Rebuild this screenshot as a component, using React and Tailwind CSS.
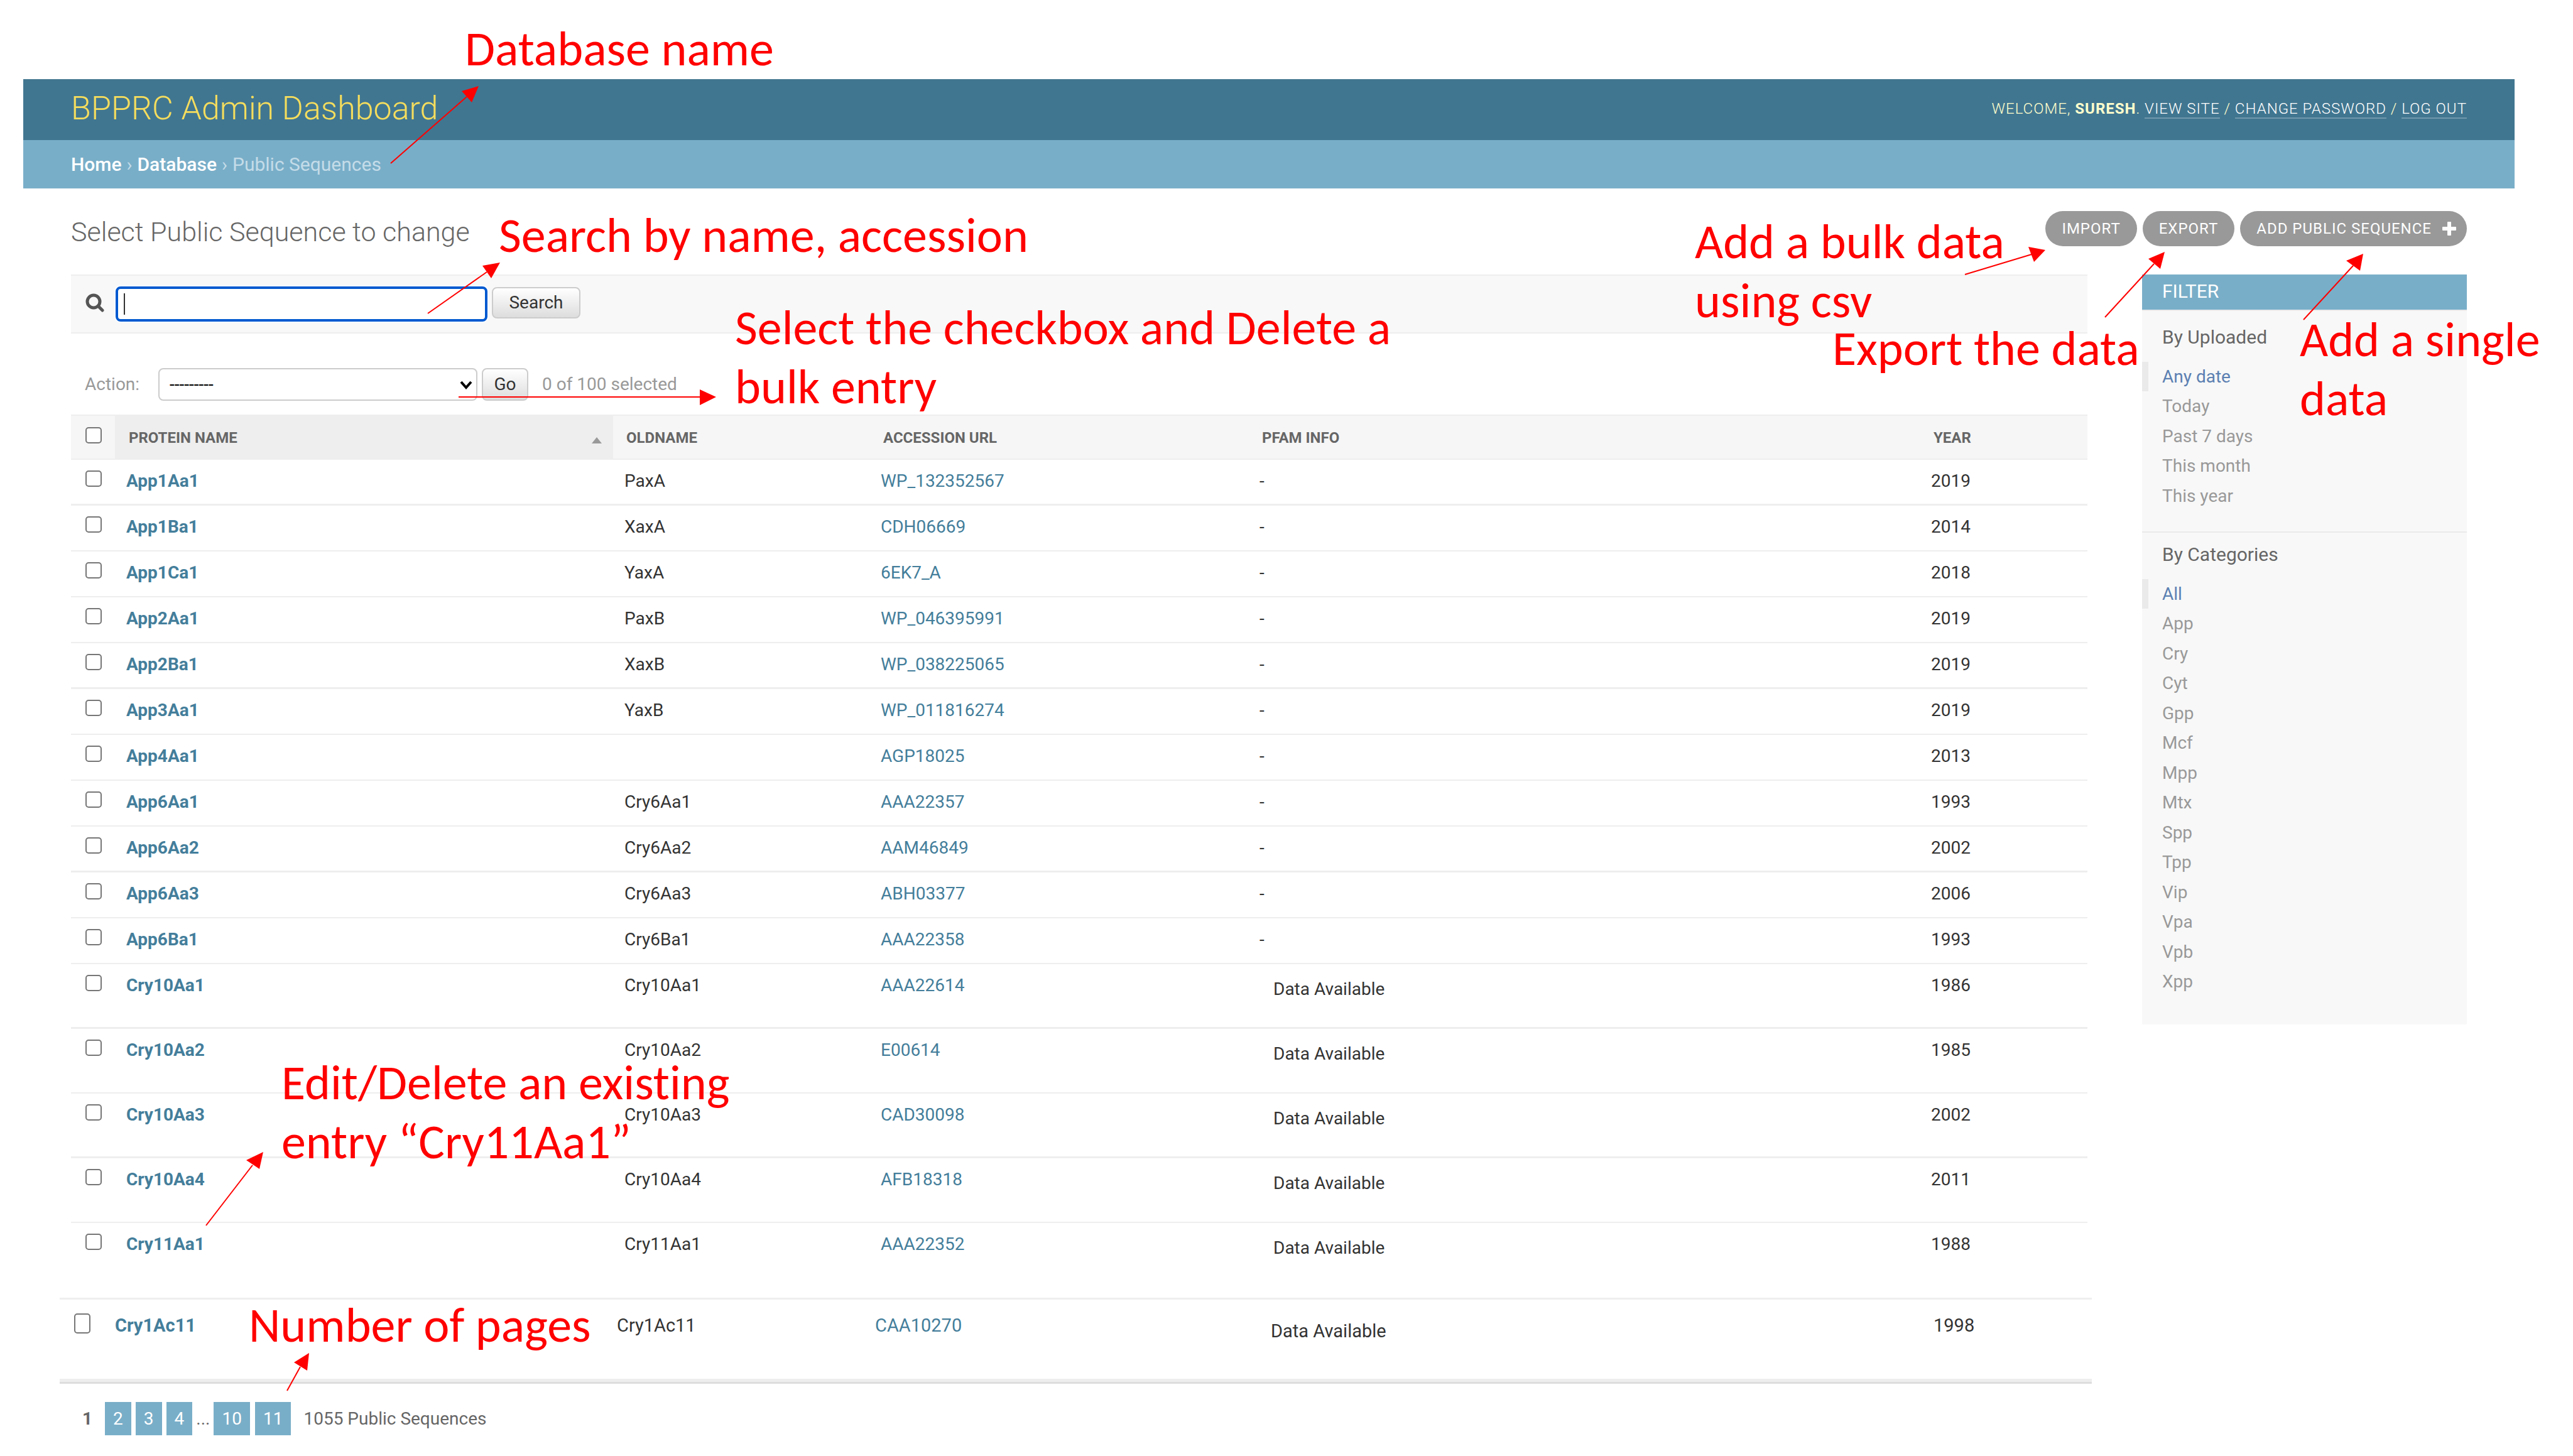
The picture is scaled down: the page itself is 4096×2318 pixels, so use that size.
import React from "react";

const rows = [
  ["App1Aa1", "PaxA", "WP_132352567", "-", "2019"],
  ["App1Ba1", "XaxA", "CDH06669", "-", "2014"],
  ["App1Ca1", "YaxA", "6EK7_A", "-", "2018"],
  ["App2Aa1", "PaxB", "WP_046395991", "-", "2019"],
  ["App2Ba1", "XaxB", "WP_038225065", "-", "2019"],
  ["App3Aa1", "YaxB", "WP_011816274", "-", "2019"],
  ["App4Aa1", "", "AGP18025", "-", "2013"],
  ["App6Aa1", "Cry6Aa1", "AAA22357", "-", "1993"],
  ["App6Aa2", "Cry6Aa2", "AAM46849", "-", "2002"],
  ["App6Aa3", "Cry6Aa3", "ABH03377", "-", "2006"],
  ["App6Ba1", "Cry6Ba1", "AAA22358", "-", "1993"],
  ["Cry10Aa1", "Cry10Aa1", "AAA22614", "Data Available", "1986"],
  ["Cry10Aa2", "Cry10Aa2", "E00614", "Data Available", "1985"],
  ["Cry10Aa3", "Cry10Aa3", "CAD30098", "Data Available", "2002"],
  ["Cry10Aa4", "Cry10Aa4", "AFB18318", "Data Available", "2011"],
  ["Cry11Aa1", "Cry11Aa1", "AAA22352", "Data Available", "1988"],
];

const heavyRows = [0, 4, 8, 11, 13];

const dates = ["Any date", "Today", "Past 7 days", "This month", "This year"];
const categories = ["All", "App", "Cry", "Cyt", "Gpp", "Mcf", "Mpp", "Mtx", "Spp", "Tpp", "Vip", "Vpa", "Vpb", "Xpp"];

const arrows = [
  { from: [622, 260], base: [743, 154], head: "762,137 735,145 751,163" },
  { from: [681, 499], base: [775, 433], head: "796,418 768,423 782,443" },
  { from: [730, 632], base: [1116, 632], head: "1140,632 1114,620 1114,645" },
  { from: [3128, 437], base: [3234, 405], head: "3256,398 3229,393 3238,417" },
  { from: [3351, 505], base: [3429, 420], head: "3446,401 3420,412 3439,428" },
  { from: [3667, 509], base: [3746, 423], head: "3762,404 3735,415 3757,431" },
  { from: [328, 1951], base: [402, 1855], head: "419,1834 392,1847 413,1861" },
  { from: [457, 2214], base: [478, 2176], head: "492,2154 468,2169 489,2182" },
];

function Check({ label, tall }) {
  return (
    <input
      type="checkbox"
      aria-label={label}
      className={`block w-[26px] appearance-none rounded-[5px] border-2 border-[#767676] bg-white ${tall ? "h-8" : "h-[26px]"}`}
    />
  );
}

function Columns() {
  return (
    <colgroup>
      <col className="w-[70px]" />
      <col className="w-[793px]" />
      <col className="w-[409px]" />
      <col className="w-[602px]" />
      <col className="w-[1069px]" />
      <col />
    </colgroup>
  );
}

function FilterList({ title, items }) {
  return (
    <section>
      <h3 className="px-8 text-[30px] leading-9 text-[#666]">{title}</h3>
      <ul className="mt-[21px]">
        {items.map((item, i) => (
          <li
            key={item}
            className={`h-[47px] border-l-[10px] pl-[22px] text-[28px] leading-[47px] even:h-12 ${
              i === 0 ? "border-[#eaeaea] text-[#5b80b2]" : "border-transparent text-[#999]"
            }`}
          >
            <a href="#">{item}</a>
          </li>
        ))}
      </ul>
    </section>
  );
}

function Note({ className, children }) {
  return (
    <p className={`absolute whitespace-nowrap font-[Carlito,Calibri,Lato,sans-serif] text-[78px] leading-[94px] text-[#ff0000] [font-variant-ligatures:none] ${className}`}>
      {children}
    </p>
  );
}

const pill = "flex h-14 items-center rounded-full bg-[#999] text-[24px] uppercase tracking-[1px] text-white";
const toolLink = "border-b-2 border-white/25 text-white";
const pageLink = "flex h-[53px] items-center bg-[#79aec8] px-[13px] text-white";
const grayButton = "rounded-lg border-2 border-[#ccc] bg-linear-to-b from-white to-[#ddd] text-[28px] leading-none text-[#333]";

export default function App() {
  return (
    <div className="relative min-h-[2318px] bg-white pt-[126px] font-[Roboto,sans-serif] text-[28px] text-[#333]">
      <header className="mr-[93px] ml-[37px]">
        <div className="flex h-[97px] items-center justify-between bg-[#417690] px-[76px]">
          <h1 className="-mt-1 text-[52px] font-light text-[#f5dd5d]">BPPRC Admin Dashboard</h1>
          <div className="-mt-1 text-[24px] font-light uppercase tracking-[1px] text-[#ffc]">
            Welcome, <strong className="font-bold">Suresh</strong>. <a href="#" className={toolLink}>View site</a> /{" "}
            <a href="#" className={toolLink}>Change password</a> / <a href="#" className={toolLink}>Log out</a>
          </div>
        </div>
        <nav className="flex h-[77px] items-center gap-2 bg-[#79aec8] px-[76px] text-[30px] text-[#c4dce8]">
          <a href="#" className="font-medium text-white">Home</a>
          <span>›</span>
          <a href="#" className="font-medium text-white">Database</a>
          <span>›</span>
          <span>Public Sequences</span>
        </nav>
      </header>

      <div className="mr-[169px] ml-[113px] flex h-[137px] items-start justify-between pt-9">
        <h2 className="pt-1 text-[43px] leading-[58px] font-light text-[#666]">Select Public Sequence to change</h2>
        <div className="flex gap-[9px]">
          <a href="#" className={`${pill} px-[26px]`}>Import</a>
          <a href="#" className={`${pill} px-[26px]`}>Export</a>
          <a href="#" className={`${pill} gap-4 pr-4 pl-[26px]`}>
            Add Public Sequence
            <svg viewBox="0 0 24 24" className="size-6" aria-hidden="true">
              <path d="M10 1h4a1 1 0 0 1 1 1v7h7a1 1 0 0 1 1 1v4a1 1 0 0 1-1 1h-7v7a1 1 0 0 1-1 1h-4a1 1 0 0 1-1-1v-7H2a1 1 0 0 1-1-1v-4a1 1 0 0 1 1-1h7V2a1 1 0 0 1 1-1z" fill="#fff" />
            </svg>
          </a>
        </div>
      </div>

      <div className="mr-[169px] ml-[95px] flex items-start">
        <main className="grow">
          <form className="mr-[7px] ml-[18px] flex h-[94px] items-center border-y-2 border-[#eee] bg-[#f8f8f8] pl-[23px]" onSubmit={(e) => e.preventDefault()}>
            <svg viewBox="0 0 30 30" className="mr-[18px] mb-1 size-[30px]" aria-hidden="true">
              <circle cx="13" cy="13" r="10" fill="none" stroke="#555" strokeWidth="5" />
              <path d="M20.500 20.500l6.500 6.500" stroke="#555" strokeWidth="5" strokeLinecap="round" />
            </svg>
            <div className="relative mr-[7px]">
              <input type="text" aria-label="Search" className="block h-[56px] w-[592px] rounded-lg border-[4px] border-[#0059d0] bg-white px-2 ring-2 ring-white" />
              <span className="absolute top-[11px] left-[13px] h-[34px] w-[2px] bg-[#333]" />
            </div>
            <button className={`${grayButton} mt-[18px] h-[50px] w-[141px] self-start`}>Search</button>
          </form>

          <div className="mt-[55px] ml-10 flex h-[52px] items-center text-[#999]">
            <label htmlFor="action" className="w-[117px]">Action:</label>
            <div className="relative">
              <select id="action" className="block h-[52px] w-[508px] appearance-none rounded-lg border-2 border-[#ccc] bg-white px-4 text-[28px] text-black">
                <option>---------</option>
              </select>
              <svg viewBox="0 0 20 14" className="pointer-events-none absolute top-[20px] right-[8px] h-[14px] w-5" aria-hidden="true">
                <path d="M2 2l8 9 8-9" fill="none" stroke="#000" strokeWidth="4" />
              </svg>
            </div>
            <button className={`${grayButton} ml-[7px] h-[52px] w-[74px]`}>Go</button>
            <span className="ml-[22px]">0 of 100 selected</span>
          </div>

          <div className="mt-[22px] mr-[7px] ml-[18px]">
            <table className="w-full table-fixed border-separate border-spacing-0 text-left">
              <Columns />
              <thead>
                <tr className="h-[72px] text-[24px] text-[#666] uppercase *:border-y-2 *:border-[#eee] *:bg-[#f6f6f6] *:p-0 *:pt-[2px] *:font-bold">
                  <th><div className="pb-2 pl-[23px]"><Check label="Select all" /></div></th>
                  <th className="bg-[#eee]!">
                    <div className="flex items-center justify-between pr-[18px] pl-[22px]">
                      Protein name
                      <svg viewBox="0 0 16 10" className="mt-2 h-2.5 w-4" aria-hidden="true"><path d="M8 0l8 10H0z" fill="#999" /></svg>
                    </div>
                  </th>
                  <th><div className="pl-[21px]">Oldname</div></th>
                  <th><div className="pl-[21px]">Accession url</div></th>
                  <th><div className="pl-[22px]">Pfam info</div></th>
                  <th><div className="pl-[22px]">Year</div></th>
                </tr>
              </thead>
              <tbody>
                {rows.map(([name, old, acc, pfam, year], i) => (
                  <tr
                    key={name}
                    className={`align-top leading-[34px] *:border-[#eee] *:p-0 *:pt-[17px] ${i === 15 ? "h-[119px]" : i > 10 ? "h-[103px]" : "h-[73px]"} ${
                      i === 15 ? "*:border-b-0" : heavyRows.includes(i) ? "*:border-b-3" : "*:border-b-2"
                    }`}
                  >
                    <td><div className="pl-[23px]"><Check label={`Select ${name}`} /></div></td>
                    <th className="font-bold text-[#447e9b]"><a href="#" className="pl-[18px]">{name}</a></th>
                    <td><div className="pl-[18px]">{old}</div></td>
                    <td className="text-[#447e9b]"><a href="#" className="pl-[17px]">{acc}</a></td>
                    <td><div className={pfam === "-" ? "pl-[18px]" : "pt-[6px] pl-10"}>{pfam}</div></td>
                    <td><div className="pl-[18px]">{year}</div></td>
                  </tr>
                ))}
              </tbody>
            </table>
          </div>

          <table className="w-full table-fixed border-separate border-spacing-0 text-left">
            <Columns />
            <tbody>
              <tr className="h-[134px] align-top text-[29px] leading-[38px] *:border-t-3 *:border-b-5 *:border-[#eee] *:p-0 *:pt-[22px]">
                <td><div className="pl-[23px]"><Check label="Select Cry1Ac11" tall /></div></td>
                <th className="font-bold text-[#447e9b]"><a href="#" className="pl-[18px]">Cry1Ac11</a></th>
                <td><div className="pl-6">Cry1Ac11</div></td>
                <td className="text-[#447e9b]"><a href="#" className="pl-[26px]">CAA10270</a></td>
                <td><div className="pt-[9px] pl-[54px]">Data Available</div></td>
                <td><div className="pl-10">1998</div></td>
              </tr>
            </tbody>
          </table>

          <div className="flex items-center border-t-3 border-[#ddd] pt-[29px] pl-9 text-[28px] text-[#666]">
            <span className="mr-5 font-bold">1</span>
            <a href="#" className={`${pageLink} mr-[7px]`}>2</a>
            <a href="#" className={`${pageLink} mr-[7px]`}>3</a>
            <a href="#" className={pageLink}>4</a>
            <span className="mx-[6px]">...</span>
            <a href="#" className={`${pageLink} mr-[8px]`}>10</a>
            <a href="#" className={pageLink}>11</a>
            <span className="ml-5">1055 Public Sequences</span>
          </div>
        </main>

        <aside className="ml-20 w-[517px] shrink-0 bg-[#f8f8f8] pb-[44px]">
          <h2 className="flex h-[58px] items-center border-b-2 border-[#eaeaea] bg-[#79aec8] px-8 pb-1 text-[30px] text-white uppercase">Filter</h2>
          <div className="border-b-2 border-[#eaeaea] pt-6 pb-[33px]">
            <FilterList title="By Uploaded" items={dates} />
          </div>
          <div className="pt-[17px]">
            <FilterList title="By Categories" items={categories} />
          </div>
        </aside>
      </div>

      <svg viewBox="0 0 4096 2318" className="pointer-events-none absolute top-0 left-0 w-full" aria-hidden="true">
        {arrows.map((a) => (
          <g key={a.head}>
            <line x1={a.from[0]} y1={a.from[1]} x2={a.base[0]} y2={a.base[1]} stroke="#ff0000" strokeWidth="2" />
            <polygon points={a.head} fill="#ff0000" />
          </g>
        ))}
      </svg>
      <Note className="top-[31px] left-[740px]">Database name</Note>
      <Note className="top-[328px] left-[794px]">Search by name, accession</Note>
      <Note className="top-[475px] left-[1170px]">Select the checkbox and Delete a<br />bulk entry</Note>
      <Note className="top-[338px] left-[2698px]">Add a bulk data<br />using csv</Note>
      <Note className="top-[508px] left-[2917px]">Export the data</Note>
      <Note className="top-[494px] left-[3661px]">Add a single<br />data</Note>
      <Note className="top-[1677px] left-[448px]">Edit/Delete an existing<br />entry “Cry11Aa1”</Note>
      <Note className="top-[2063px] left-[396px]">Number of pages</Note>
    </div>
  );
}
